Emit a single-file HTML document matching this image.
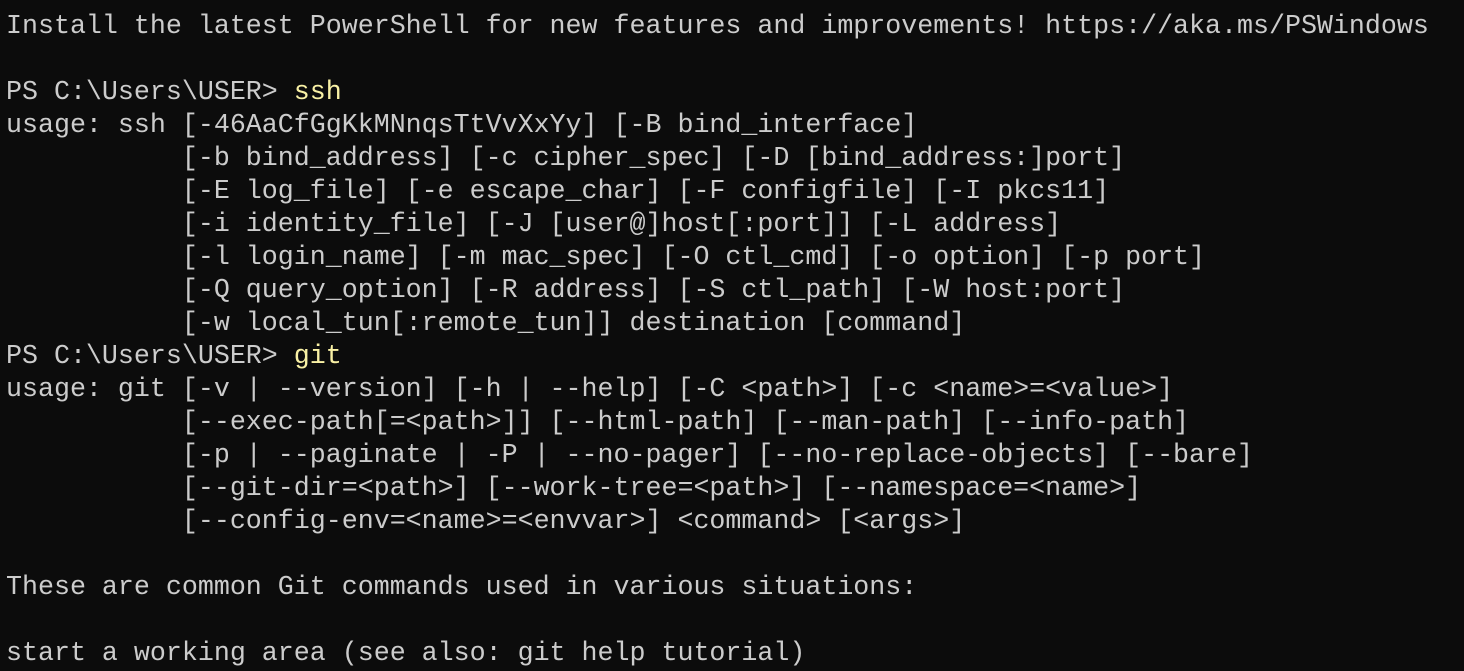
<!DOCTYPE html>
<html><head><style>
html,body{margin:0;padding:0;background:#0c0c0c;width:1464px;height:666px;overflow:hidden}
pre{margin:0;position:absolute;left:6px;top:11px;font-family:"Liberation Mono",monospace;font-size:26.65px;line-height:33px;color:#cccccc;white-space:pre}
.y{color:#f9f1a5}
</style></head><body><pre>Install the latest PowerShell for new features and improvements! https://aka.ms/PSWindows

PS C:\Users\USER&gt; <span class="y">ssh</span>
usage: ssh [-46AaCfGgKkMNnqsTtVvXxYy] [-B bind_interface]
           [-b bind_address] [-c cipher_spec] [-D [bind_address:]port]
           [-E log_file] [-e escape_char] [-F configfile] [-I pkcs11]
           [-i identity_file] [-J [user@]host[:port]] [-L address]
           [-l login_name] [-m mac_spec] [-O ctl_cmd] [-o option] [-p port]
           [-Q query_option] [-R address] [-S ctl_path] [-W host:port]
           [-w local_tun[:remote_tun]] destination [command]
PS C:\Users\USER&gt; <span class="y">git</span>
usage: git [-v | --version] [-h | --help] [-C &lt;path&gt;] [-c &lt;name&gt;=&lt;value&gt;]
           [--exec-path[=&lt;path&gt;]] [--html-path] [--man-path] [--info-path]
           [-p | --paginate | -P | --no-pager] [--no-replace-objects] [--bare]
           [--git-dir=&lt;path&gt;] [--work-tree=&lt;path&gt;] [--namespace=&lt;name&gt;]
           [--config-env=&lt;name&gt;=&lt;envvar&gt;] &lt;command&gt; [&lt;args&gt;]

These are common Git commands used in various situations:

start a working area (see also: git help tutorial)</pre></body></html>
